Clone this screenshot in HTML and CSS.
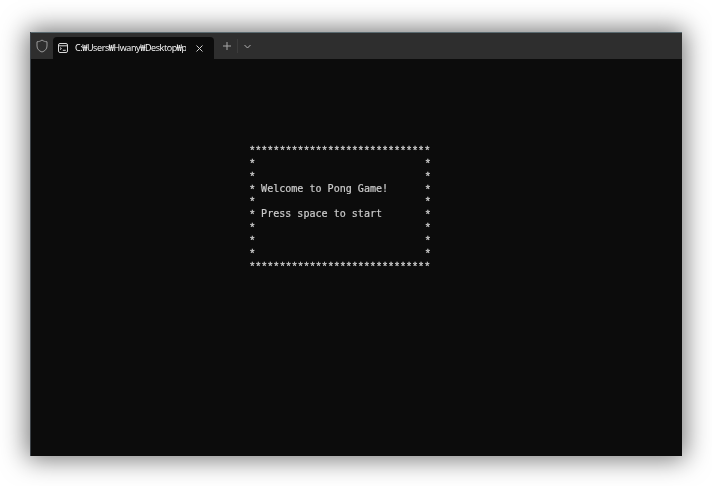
FILE: index.html
```html
<!DOCTYPE html>
<html lang="en">
<head>
<meta charset="utf-8">
<title>Pong</title>
<link rel="stylesheet" href="styles.css">
</head>
<body>
<main class="window">
  <header class="tabbar">
    <span class="shield-slot">
      <svg class="icon" width="12" height="14" viewBox="0 0 12 14" fill="none" stroke="#9a9a9a" stroke-width="1"><path d="M6 1 C4.5 2.2 2.8 2.7 1 2.8 V7 C1 10 3 12 6 13 C9 12 11 10 11 7 V2.8 C9.2 2.7 7.5 2.2 6 1 Z"/></svg>
    </span>
    <div class="tab">
      <svg class="icon" width="10" height="10" viewBox="0 0 10 10" fill="none" stroke="#d8d8d8" stroke-width="1"><rect x="0.5" y="0.5" width="9" height="9" rx="1.5"/><path d="M0.5 2.8H9.5M2 4.6L3.4 5.6L2 6.6M4.8 7.3H7.8"/></svg>
      <span class="tab-title">C:₩Users₩Hwany₩Desktop₩pong</span>
      <svg class="icon close" width="7" height="7" viewBox="0 0 7 7" fill="none" stroke="#cfcfcf" stroke-width="1"><path d="M0.5 0.5L6.5 6.5M6.5 0.5L0.5 6.5"/></svg>
    </div>
    <svg class="icon plus" width="8" height="8" viewBox="0 0 8 8" fill="none" stroke="#a8a8a8" stroke-width="1"><path d="M4 0V8M0 4H8"/></svg>
    <span class="divider"></span>
    <svg class="icon chevron" width="7" height="5" viewBox="0 0 7 5" fill="none" stroke="#b0b0b0" stroke-width="1"><path d="M0.5 1L3.5 4L6.5 1"/></svg>
  </header>
  <pre class="console"><span class="star">******************************</span>
<span class="star">*</span>                            <span class="star">*</span>
<span class="star">*</span>                            <span class="star">*</span>
<span class="star">*</span> Welcome to Pong Game!      <span class="star">*</span>
<span class="star">*</span>                            <span class="star">*</span>
<span class="star">*</span> Press space to start       <span class="star">*</span>
<span class="star">*</span>                            <span class="star">*</span>
<span class="star">*</span>                            <span class="star">*</span>
<span class="star">*</span>                            <span class="star">*</span>
<span class="star">******************************</span></pre>
</main>
</body>
</html>
```
FILE: styles.css
```css
html, body {
  margin: 0;
  height: 100%;
  background: #ffffff;
  overflow: hidden;
}

body {
  box-sizing: border-box;
  padding: 32px 30px 30px;
}

.window {
  display: flex;
  flex-direction: column;
  height: 424px;
  background: #0c0c0c;
  box-shadow: 0 0 24px 3px rgba(0, 0, 0, 0.55);
  border-left: 1px solid #3c4248;
  box-sizing: border-box;
}

.tabbar {
  display: flex;
  align-items: center;
  height: 27px;
  flex: none;
  box-sizing: border-box;
  border-top: 1px solid #5a6a70;
  background: #2e2e2e;
}

.icon {
  display: block;
  flex: none;
}

.shield-slot {
  display: flex;
  justify-content: center;
  width: 22px;
  flex: none;
}

.tab {
  display: flex;
  align-items: center;
  align-self: flex-end;
  box-sizing: border-box;
  width: 161px;
  height: 22px;
  margin-top: 4px;
  padding-left: 5px;
  background: #0c0c0c;
  border-radius: 4px 4px 0 0;
}

.tab-title {
  width: 111px;
  margin-left: 7px;
  overflow: hidden;
  white-space: nowrap;
  font: 500 9px/12px "Open Sans", "Noto Sans CJK KR", sans-serif;
  letter-spacing: -0.4px;
  color: #ffffff;
  will-change: transform;
}

.close {
  margin-left: 10px;
}

.plus {
  margin-left: 9px;
}

.divider {
  width: 1px;
  height: 14px;
  margin-left: 6px;
  background: #3c3c3c;
}

.chevron {
  margin-left: 6px;
}

.console {
  margin: 0;
  padding: 85px 0 0 218px;
  font: 10.05px/12.85px "DejaVu Sans Mono", monospace;
  color: #cccccc;
  -webkit-text-stroke: 0.2px #cccccc;
  will-change: transform;
}

.star {
  font-family: "Liberation Mono", monospace;
  font-size: 11px;
  letter-spacing: -0.57px;
  line-height: 0;
  -webkit-text-stroke: 0.3px #cccccc;
  vertical-align: -1px;
}
```
